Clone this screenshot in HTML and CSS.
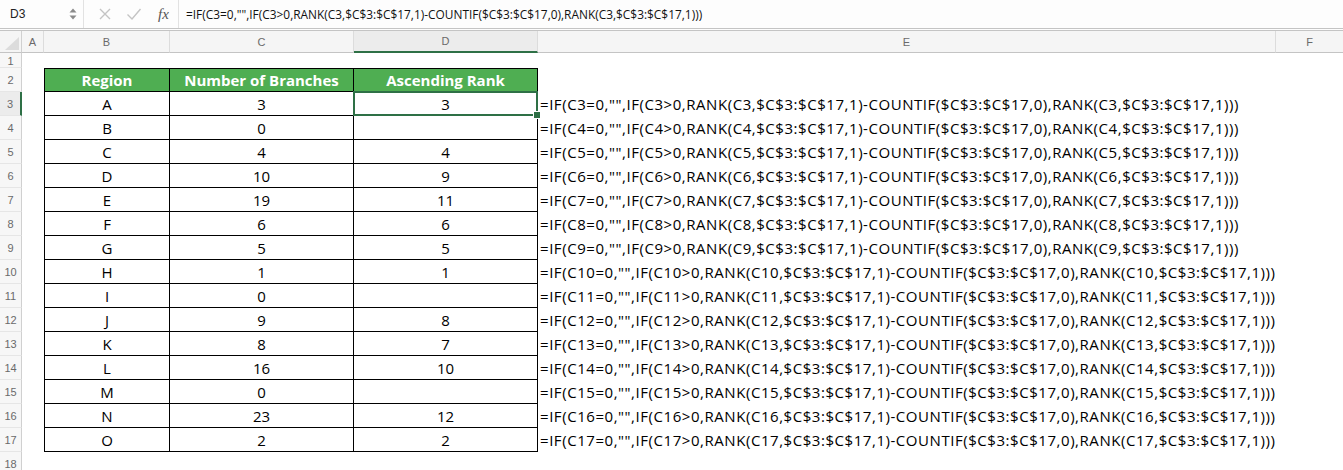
FILE: index.html
```html
<!DOCTYPE html>
<html>
<head>
<meta charset="utf-8">
<link rel="stylesheet" href="styles.css">
</head>
<body>
<div class="fbar">
  <div class="namebox"><span class="nb-text">D3</span><span class="nb-arrows"><svg width="8" height="14" viewBox="0 0 8 14"><path d="M0.5 5.5 L4 1.5 L7.5 5.5 Z" fill="#8a8a8a"/><path d="M0.5 8.5 L4 12.5 L7.5 8.5 Z" fill="#8a8a8a"/></svg></span></div>
  <div class="fb-icons">
    <svg class="ic-x" width="14" height="14" viewBox="0 0 14 14"><path d="M2 2 L12 12 M12 2 L2 12" stroke="#c4c4c4" stroke-width="1.4" fill="none"/></svg>
    <svg class="ic-ok" width="16" height="14" viewBox="0 0 16 14"><path d="M1.5 7.5 L6 12 L14.5 2" stroke="#c4c4c4" stroke-width="1.4" fill="none"/></svg>
    <span class="fx">fx</span>
  </div>
  <div class="formula">=IF(C3=0,"",IF(C3&gt;0,RANK(C3,$C$3:$C$17,1)-COUNTIF($C$3:$C$17,0),RANK(C3,$C$3:$C$17,1)))</div>
</div>
<div class="sheet">
  <div class="corner"><svg width="22" height="22" viewBox="0 0 22 22"><path d="M5 19 L19 19 L19 6 Z" fill="#dcdcdc"/></svg></div>
  <div class="ch">A</div><div class="ch">B</div><div class="ch">C</div><div class="ch ch-sel">D</div><div class="ch">E</div><div class="ch ch-last">F</div>

  <div class="rh">1</div><div class="c"></div><div class="c"></div><div class="c"></div><div class="c"></div><div class="c"></div><div class="c"></div>

  <div class="rh">2</div><div class="c"></div><div class="th first">Region</div><div class="th">Number of Branches</div><div class="th">Ascending Rank</div><div class="c"></div><div class="c"></div>

  <div class="rh rh-sel">3</div><div class="c"></div><div class="t first">A</div><div class="t">3</div><div class="t sel">3</div><div class="f">=IF(C3=0,"",IF(C3&gt;0,RANK(C3,$C$3:$C$17,1)-COUNTIF($C$3:$C$17,0),RANK(C3,$C$3:$C$17,1)))</div><div class="c"></div>

  <div class="rh">4</div><div class="c"></div><div class="t first">B</div><div class="t">0</div><div class="t"></div><div class="f">=IF(C4=0,"",IF(C4&gt;0,RANK(C4,$C$3:$C$17,1)-COUNTIF($C$3:$C$17,0),RANK(C4,$C$3:$C$17,1)))</div><div class="c"></div>

  <div class="rh">5</div><div class="c"></div><div class="t first">C</div><div class="t">4</div><div class="t">4</div><div class="f">=IF(C5=0,"",IF(C5&gt;0,RANK(C5,$C$3:$C$17,1)-COUNTIF($C$3:$C$17,0),RANK(C5,$C$3:$C$17,1)))</div><div class="c"></div>

  <div class="rh">6</div><div class="c"></div><div class="t first">D</div><div class="t">10</div><div class="t">9</div><div class="f">=IF(C6=0,"",IF(C6&gt;0,RANK(C6,$C$3:$C$17,1)-COUNTIF($C$3:$C$17,0),RANK(C6,$C$3:$C$17,1)))</div><div class="c"></div>

  <div class="rh">7</div><div class="c"></div><div class="t first">E</div><div class="t">19</div><div class="t">11</div><div class="f">=IF(C7=0,"",IF(C7&gt;0,RANK(C7,$C$3:$C$17,1)-COUNTIF($C$3:$C$17,0),RANK(C7,$C$3:$C$17,1)))</div><div class="c"></div>

  <div class="rh">8</div><div class="c"></div><div class="t first">F</div><div class="t">6</div><div class="t">6</div><div class="f">=IF(C8=0,"",IF(C8&gt;0,RANK(C8,$C$3:$C$17,1)-COUNTIF($C$3:$C$17,0),RANK(C8,$C$3:$C$17,1)))</div><div class="c"></div>

  <div class="rh">9</div><div class="c"></div><div class="t first">G</div><div class="t">5</div><div class="t">5</div><div class="f">=IF(C9=0,"",IF(C9&gt;0,RANK(C9,$C$3:$C$17,1)-COUNTIF($C$3:$C$17,0),RANK(C9,$C$3:$C$17,1)))</div><div class="c"></div>

  <div class="rh">10</div><div class="c"></div><div class="t first">H</div><div class="t">1</div><div class="t">1</div><div class="f">=IF(C10=0,"",IF(C10&gt;0,RANK(C10,$C$3:$C$17,1)-COUNTIF($C$3:$C$17,0),RANK(C10,$C$3:$C$17,1)))</div><div class="c"></div>

  <div class="rh">11</div><div class="c"></div><div class="t first">I</div><div class="t">0</div><div class="t"></div><div class="f">=IF(C11=0,"",IF(C11&gt;0,RANK(C11,$C$3:$C$17,1)-COUNTIF($C$3:$C$17,0),RANK(C11,$C$3:$C$17,1)))</div><div class="c"></div>

  <div class="rh">12</div><div class="c"></div><div class="t first">J</div><div class="t">9</div><div class="t">8</div><div class="f">=IF(C12=0,"",IF(C12&gt;0,RANK(C12,$C$3:$C$17,1)-COUNTIF($C$3:$C$17,0),RANK(C12,$C$3:$C$17,1)))</div><div class="c"></div>

  <div class="rh">13</div><div class="c"></div><div class="t first">K</div><div class="t">8</div><div class="t">7</div><div class="f">=IF(C13=0,"",IF(C13&gt;0,RANK(C13,$C$3:$C$17,1)-COUNTIF($C$3:$C$17,0),RANK(C13,$C$3:$C$17,1)))</div><div class="c"></div>

  <div class="rh">14</div><div class="c"></div><div class="t first">L</div><div class="t">16</div><div class="t">10</div><div class="f">=IF(C14=0,"",IF(C14&gt;0,RANK(C14,$C$3:$C$17,1)-COUNTIF($C$3:$C$17,0),RANK(C14,$C$3:$C$17,1)))</div><div class="c"></div>

  <div class="rh">15</div><div class="c"></div><div class="t first">M</div><div class="t">0</div><div class="t"></div><div class="f">=IF(C15=0,"",IF(C15&gt;0,RANK(C15,$C$3:$C$17,1)-COUNTIF($C$3:$C$17,0),RANK(C15,$C$3:$C$17,1)))</div><div class="c"></div>

  <div class="rh">16</div><div class="c"></div><div class="t first">N</div><div class="t">23</div><div class="t">12</div><div class="f">=IF(C16=0,"",IF(C16&gt;0,RANK(C16,$C$3:$C$17,1)-COUNTIF($C$3:$C$17,0),RANK(C16,$C$3:$C$17,1)))</div><div class="c"></div>

  <div class="rh">17</div><div class="c"></div><div class="t first">O</div><div class="t">2</div><div class="t">2</div><div class="f">=IF(C17=0,"",IF(C17&gt;0,RANK(C17,$C$3:$C$17,1)-COUNTIF($C$3:$C$17,0),RANK(C17,$C$3:$C$17,1)))</div><div class="c"></div>

  <div class="rh">18</div><div class="c"></div><div class="c"></div><div class="c"></div><div class="c"></div><div class="c"></div><div class="c"></div>
</div>
</body>
</html>
```

FILE: styles.css
```css
html, body {
  margin: 0;
  padding: 0;
  background: #ffffff;
  overflow: hidden;
}

body {
  font-family: "Open Sans", "Liberation Sans", sans-serif;
  color: #000;
}

/* formula bar */
.fbar {
  height: 28px;
  display: flex;
  align-items: center;
  background: #fdfdfd;
  border-bottom: 3px double #c4c4c4;
}

.namebox {
  width: 84px;
  height: 28px;
  display: flex;
  align-items: center;
  justify-content: space-between;
  box-sizing: border-box;
  padding: 0 6px 0 10px;
  border-right: 1px solid #e2e2e2;
}

.nb-text {
  font-family: "Liberation Sans", sans-serif;
  font-size: 12px;
  color: #222;
}

.nb-arrows {
  display: flex;
  align-items: center;
}

.fb-icons {
  width: 95px;
  height: 28px;
  display: flex;
  align-items: center;
  box-sizing: border-box;
  padding-left: 14px;
  border-right: 1px solid #e2e2e2;
}

.ic-x { margin-right: 14px; }
.ic-ok { margin-right: 16px; }

.fx {
  font-family: "Liberation Serif", serif;
  font-style: italic;
  font-size: 15px;
  color: #555;
}

.formula {
  padding-left: 7px;
  font-family: "Open Sans", sans-serif;
  font-size: 11.9px;
  color: #111;
  white-space: nowrap;
}

/* sheet grid */
.sheet {
  display: grid;
  grid-template-columns: 22px 22px 126px 184px 184px 738px 1fr;
  grid-template-rows: 22px 15px repeat(17, 24px);
}

.corner {
  background: #f5f5f5;
  border-right: 1px solid #d0d0d0;
  border-bottom: 1px solid #c4c4c4;
  box-sizing: border-box;
}

.corner svg { display: block; }

.ch {
  background: #f5f5f5;
  border-right: 1px solid #dcdcdc;
  border-bottom: 1px solid #c4c4c4;
  box-sizing: border-box;
  display: flex;
  align-items: center;
  justify-content: center;
  font-family: "Liberation Sans", sans-serif;
  font-size: 11px;
  color: #6a6a6a;
}

.ch-sel {
  background: #ececec;
  border-bottom: 2px solid #2e7046;
}

.ch-last { border-right: none; }

.rh {
  background: #f7f7f7;
  border-right: 1px solid #d0d0d0;
  border-bottom: 1px solid #e6e6e6;
  box-sizing: border-box;
  display: flex;
  align-items: center;
  justify-content: center;
  padding-top: 1px;
  font-family: "Liberation Sans", sans-serif;
  font-size: 11px;
  color: #6a6a6a;
}

.rh-sel {
  background: #ececec;
  border-right: 2px solid #2e7046;
}

.c {
  background: #fff;
}

.th, .t {
  box-sizing: border-box;
  border-right: 1px solid #000;
  border-bottom: 1px solid #000;
  display: flex;
  align-items: center;
  justify-content: center;
  font-size: 15px;
  white-space: nowrap;
}

.th {
  background: #4fae52;
  color: #fff;
  font-weight: 700;
  border-top: 1px solid #000;
}

.first { border-left: 1px solid #000; }

.sel { position: relative; }

.sel::before {
  content: "";
  position: absolute;
  left: -1px;
  top: -1px;
  right: -1px;
  bottom: -1px;
  border: 2px solid #2e7046;
}

.sel::after {
  content: "";
  position: absolute;
  right: -4px;
  bottom: -4px;
  width: 6px;
  height: 6px;
  background: #2e7046;
  border: 1px solid #fff;
}

.f {
  display: flex;
  align-items: center;
  padding-left: 2px;
  font-size: 15px;
  letter-spacing: 0.55px;
  white-space: nowrap;
  overflow: visible;
}
```
